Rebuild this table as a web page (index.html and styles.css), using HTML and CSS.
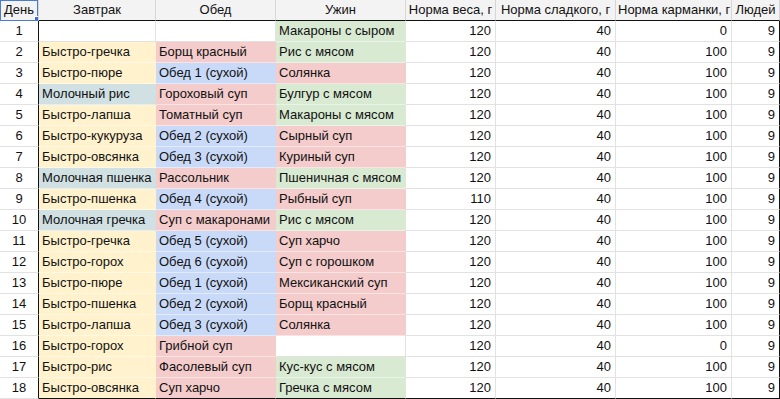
FILE: index.html
```html
<!DOCTYPE html>
<html lang="ru">
<head>
<meta charset="utf-8">
<link rel="stylesheet" href="styles.css">
</head>
<body>
<table class="sheet">
<colgroup>
<col class="c-day"><col class="c-b"><col class="c-l"><col class="c-d"><col class="c-w"><col class="c-s"><col class="c-k"><col class="c-p">
</colgroup>
<thead>
<tr>
<th class="h sel">День<span class="handle"></span></th>
<th class="h">Завтрак</th>
<th class="h">Обед</th>
<th class="h">Ужин</th>
<th class="h">Норма веса, г</th>
<th class="h">Норма сладкого, г</th>
<th class="h">Норма карманки, г</th>
<th class="h last">Людей</th>
</tr>
</thead>
<tbody>
<tr><td class="day">1</td><td></td><td></td><td class="g">Макароны с сыром</td><td class="n">120</td><td class="n">40</td><td class="n">0</td><td class="n last">9</td></tr>
<tr><td class="day">2</td><td class="y">Быстро-гречка</td><td class="r">Борщ красный</td><td class="g">Рис с мясом</td><td class="n">120</td><td class="n">40</td><td class="n">100</td><td class="n last">9</td></tr>
<tr><td class="day">3</td><td class="y">Быстро-пюре</td><td class="b">Обед 1 (сухой)</td><td class="r">Солянка</td><td class="n">120</td><td class="n">40</td><td class="n">100</td><td class="n last">9</td></tr>
<tr><td class="day">4</td><td class="c">Молочный рис</td><td class="r">Гороховый суп</td><td class="g">Булгур с мясом</td><td class="n">120</td><td class="n">40</td><td class="n">100</td><td class="n last">9</td></tr>
<tr><td class="day">5</td><td class="y">Быстро-лапша</td><td class="r">Томатный суп</td><td class="g">Макароны с мясом</td><td class="n">120</td><td class="n">40</td><td class="n">100</td><td class="n last">9</td></tr>
<tr><td class="day">6</td><td class="y">Быстро-кукуруза</td><td class="b">Обед 2 (сухой)</td><td class="r">Сырный суп</td><td class="n">120</td><td class="n">40</td><td class="n">100</td><td class="n last">9</td></tr>
<tr><td class="day">7</td><td class="y">Быстро-овсянка</td><td class="b">Обед 3 (сухой)</td><td class="r">Куриный суп</td><td class="n">120</td><td class="n">40</td><td class="n">100</td><td class="n last">9</td></tr>
<tr><td class="day">8</td><td class="c">Молочная пшенка</td><td class="r">Рассольник</td><td class="g">Пшеничная с мясом</td><td class="n">120</td><td class="n">40</td><td class="n">100</td><td class="n last">9</td></tr>
<tr><td class="day">9</td><td class="y">Быстро-пшенка</td><td class="b">Обед 4 (сухой)</td><td class="r">Рыбный суп</td><td class="n">110</td><td class="n">40</td><td class="n">100</td><td class="n last">9</td></tr>
<tr><td class="day">10</td><td class="c">Молочная гречка</td><td class="r">Суп с макаронами</td><td class="g">Рис с мясом</td><td class="n">120</td><td class="n">40</td><td class="n">100</td><td class="n last">9</td></tr>
<tr><td class="day">11</td><td class="y">Быстро-гречка</td><td class="b">Обед 5 (сухой)</td><td class="r">Суп харчо</td><td class="n">120</td><td class="n">40</td><td class="n">100</td><td class="n last">9</td></tr>
<tr><td class="day">12</td><td class="y">Быстро-горох</td><td class="b">Обед 6 (сухой)</td><td class="r">Суп с горошком</td><td class="n">120</td><td class="n">40</td><td class="n">100</td><td class="n last">9</td></tr>
<tr><td class="day">13</td><td class="y">Быстро-пюре</td><td class="b">Обед 1 (сухой)</td><td class="r">Мексиканский суп</td><td class="n">120</td><td class="n">40</td><td class="n">100</td><td class="n last">9</td></tr>
<tr><td class="day">14</td><td class="y">Быстро-пшенка</td><td class="b">Обед 2 (сухой)</td><td class="r">Борщ красный</td><td class="n">120</td><td class="n">40</td><td class="n">100</td><td class="n last">9</td></tr>
<tr><td class="day">15</td><td class="y">Быстро-лапша</td><td class="b">Обед 3 (сухой)</td><td class="r">Солянка</td><td class="n">120</td><td class="n">40</td><td class="n">100</td><td class="n last">9</td></tr>
<tr><td class="day">16</td><td class="y">Быстро-горох</td><td class="r">Грибной суп</td><td></td><td class="n">120</td><td class="n">40</td><td class="n">0</td><td class="n last">9</td></tr>
<tr><td class="day">17</td><td class="y">Быстро-рис</td><td class="r">Фасолевый суп</td><td class="g">Кус-кус с мясом</td><td class="n">120</td><td class="n">40</td><td class="n">100</td><td class="n last">9</td></tr>
<tr class="end"><td class="day">18</td><td class="y">Быстро-овсянка</td><td class="r">Суп харчо</td><td class="g">Гречка с мясом</td><td class="n">120</td><td class="n">40</td><td class="n">100</td><td class="n last">9</td></tr>
</tbody>
</table>
</body>
</html>
```
FILE: styles.css
```css
html, body {
  margin: 0;
  padding: 0;
  background: #ffffff;
  overflow: hidden;
}
.sheet {
  border-collapse: separate;
  border-spacing: 0;
  table-layout: fixed;
  width: 780px;
  font-family: "Liberation Sans", Arial, sans-serif;
  font-size: 13px;
  color: #111;
}
.c-day { width: 39px; }
.c-b { width: 117px; }
.c-l { width: 120px; }
.c-d { width: 130px; }
.c-w { width: 90px; }
.c-s { width: 120px; }
.c-k { width: 116px; }
.c-p { width: 48px; }

.sheet th, .sheet td {
  box-sizing: content-box;
  height: 20px;
  padding: 0 3px;
  border-right: 1px solid #e2e2e2;
  border-bottom: 1px solid #e2e2e2;
  white-space: nowrap;
  overflow: hidden;
  line-height: 20px;
  vertical-align: middle;
}
.sheet th.h {
  font-weight: normal;
  text-align: center;
  background: #f3f3f3;
  border-right: 1px solid #d6d6d6;
  border-bottom: 1px solid #111;
  padding: 0 2px;
}
.sheet th.sel {
  position: relative;
  background: #f3f3f3;
  border-bottom-color: #4a7ad8;
}
.sheet th.sel::after {
  content: "";
  position: absolute;
  inset: 0 0 -1px 0;
  border: 1px solid #4a7ad8;
  pointer-events: none;
}
.handle {
  position: absolute;
  right: -4px;
  bottom: -4px;
  width: 6px;
  height: 6px;
  background: #3b6fd6;
  border: 1px solid #fff;
  z-index: 2;
}
.sheet td.day {
  text-align: center;
  border-right: 1px solid #111;
  padding: 0;
}
.sheet .last {
  border-right: 1px solid #111;
}
.sheet td.n {
  text-align: right;
  padding-right: 4px;
}
.sheet td.y, .sheet td.r, .sheet td.b, .sheet td.g, .sheet td.c {
  border-right-color: transparent;
  border-bottom-color: rgba(255, 255, 255, 0.45);
}
.sheet tr.end td {
  border-bottom: 1px solid #111;
}
.sheet tr.end td.day {
  border-bottom-color: #e2e2e2;
}
.y { background: #fff2cc; }
.r { background: #f4cccc; }
.b { background: #c9daf8; }
.g { background: #d9ead3; }
.c { background: #d0e0e3; }
```
